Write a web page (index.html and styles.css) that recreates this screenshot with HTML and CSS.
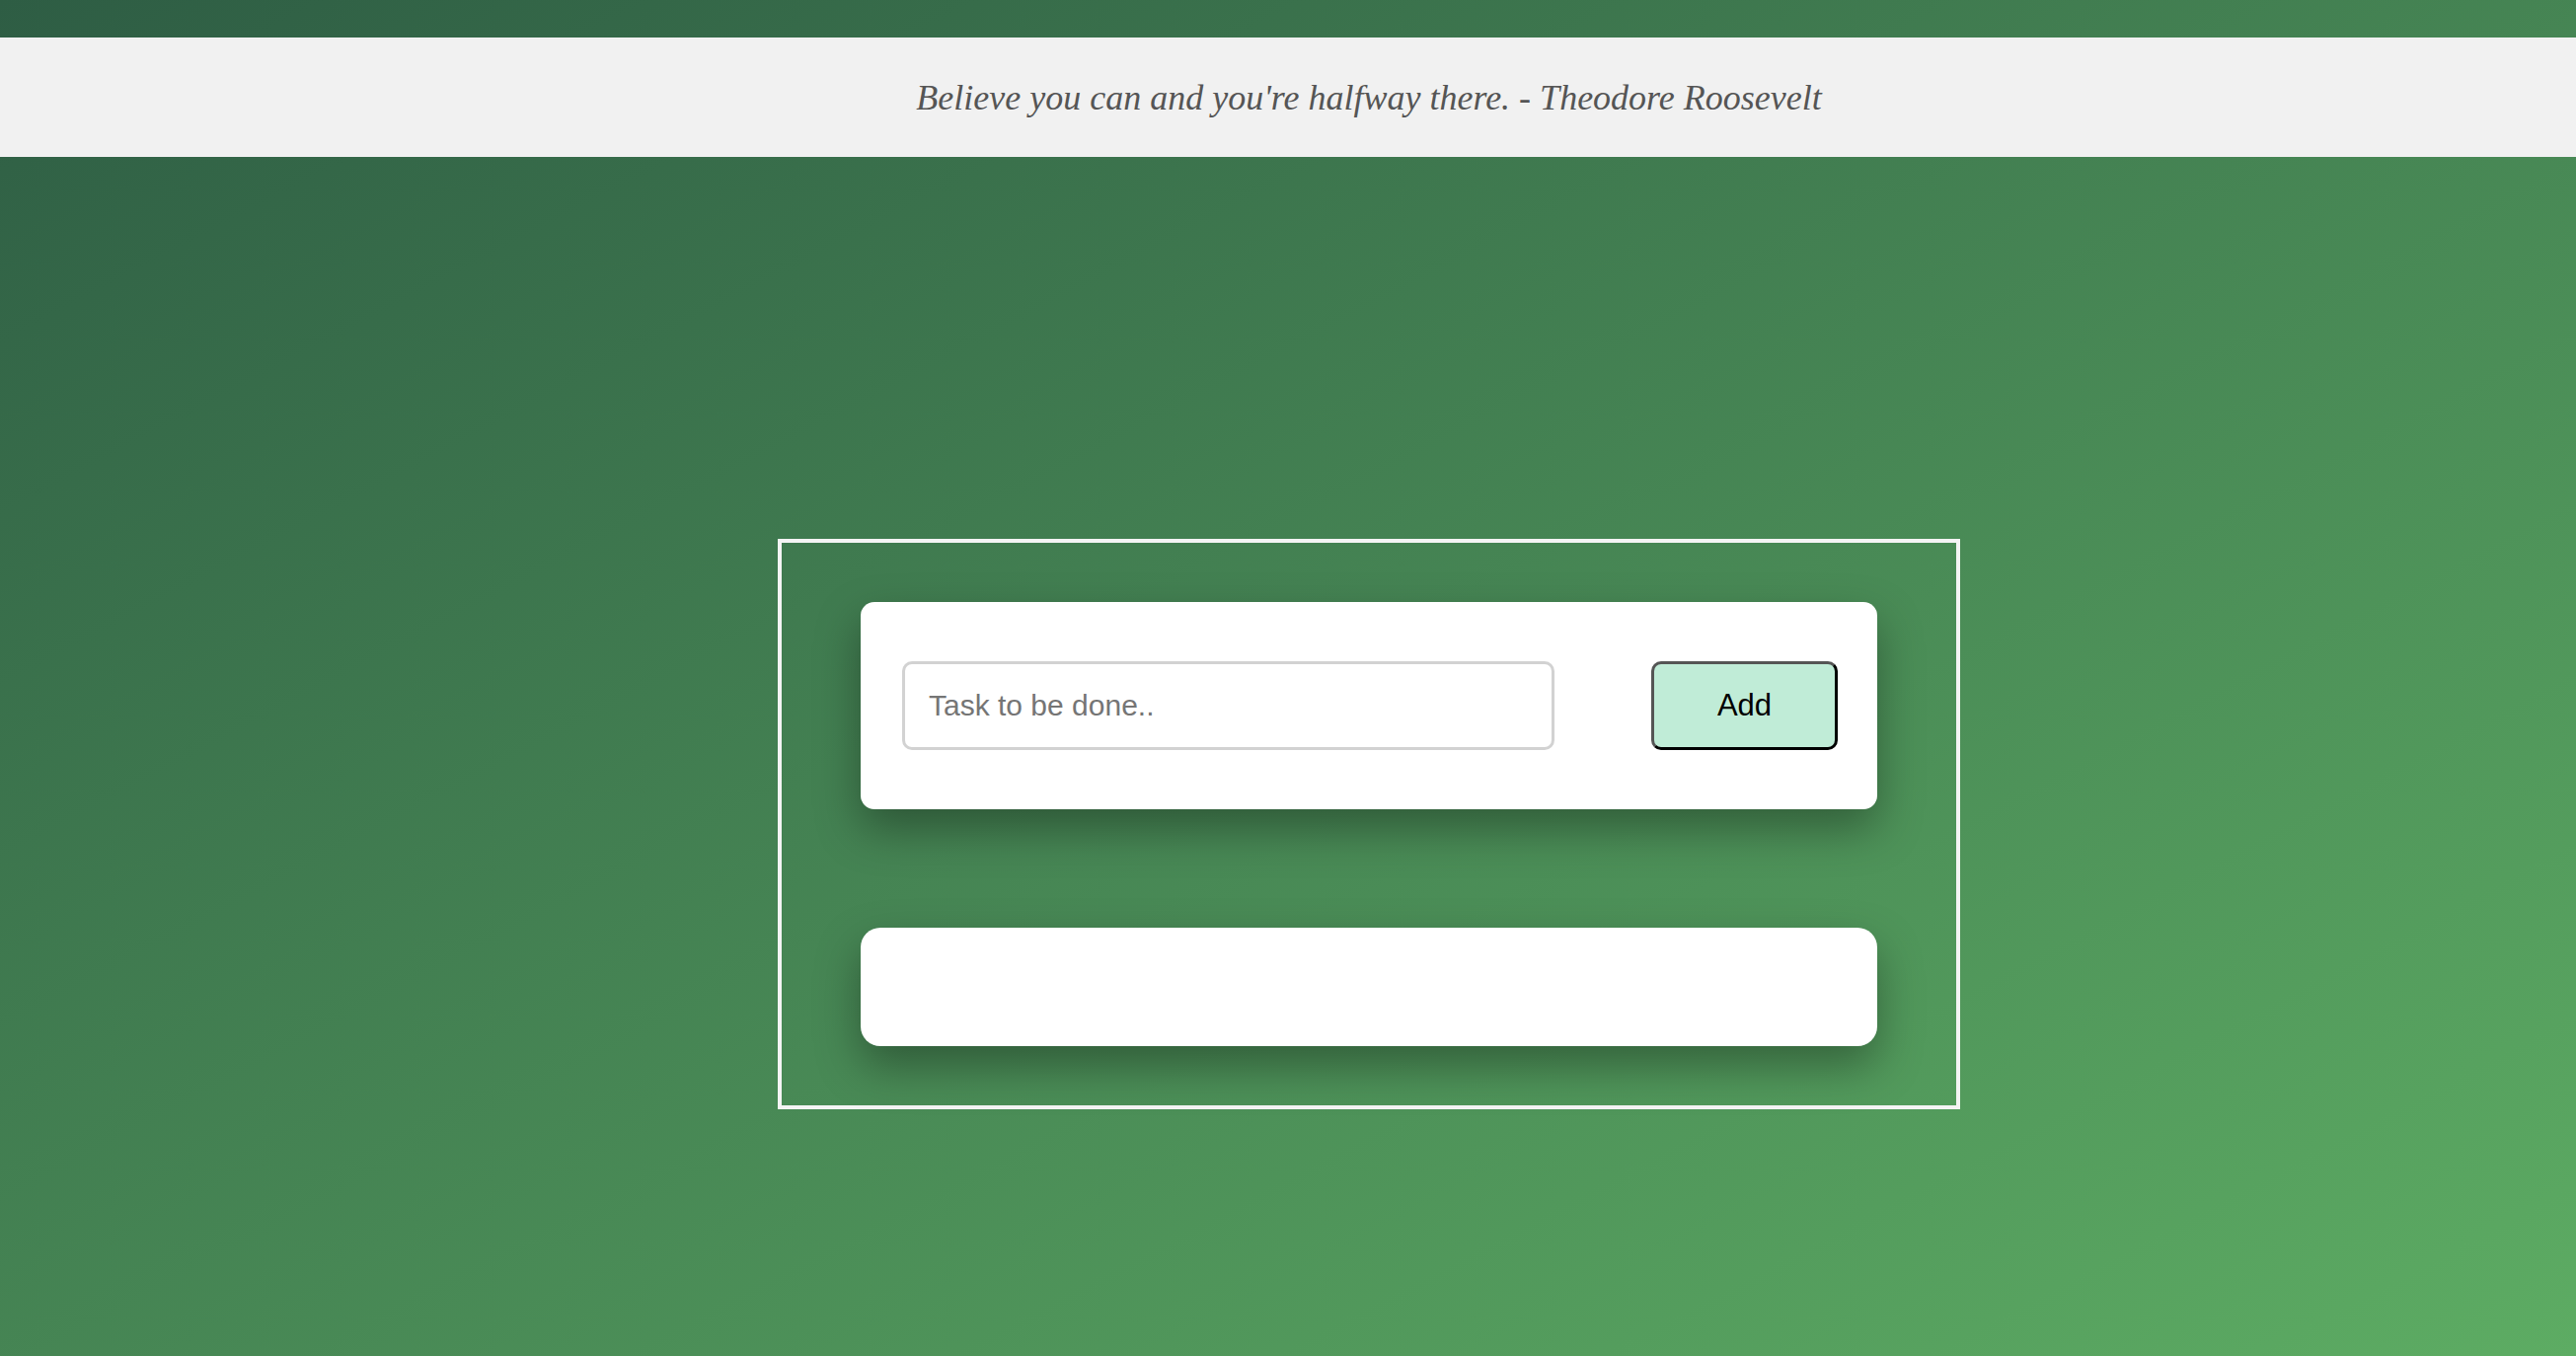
FILE: index.html
```html
<!DOCTYPE html>
<html lang="en">
<head>
<meta charset="utf-8">
<title>To Do</title>
<link rel="stylesheet" href="styles.css">
</head>
<body>
<header class="quote-bar">
  <p class="quote">Believe you can and you're halfway there. - Theodore Roosevelt</p>
</header>
<main class="main">
  <section class="frame">
    <div class="entry-card">
      <input class="task-input" type="text" placeholder="Task to be done..">
      <button class="add-btn" type="button">Add</button>
    </div>
    <div class="list-card"></div>
  </section>
</main>
</body>
</html>
```

FILE: styles.css
```css
html, body {
  margin: 0;
  padding: 0;
  min-height: 100%;
}
body {
  min-height: 1374px;
  background: linear-gradient(to bottom right, #2e5d44, #5dac63);
  font-family: "Liberation Sans", Arial, sans-serif;
}
.quote-bar {
  margin-top: 38px;
  height: 121px;
  background: #f1f1f1;
  display: flex;
  align-items: center;
  justify-content: center;
  padding-left: 164px;
}
.quote {
  margin: 0;
  font-family: "Liberation Serif", "Times New Roman", serif;
  font-style: italic;
  font-size: 36px;
  color: #555555;
}
.main {
  display: flex;
  justify-content: center;
  padding-left: 164px;
  margin-top: 387px;
}
.frame {
  border: 4px solid #f4f4f4;
  padding: 60px 80px 60px;
  display: flex;
  flex-direction: column;
  gap: 120px;
}
.entry-card {
  width: 1030px;
  box-sizing: border-box;
  background: #ffffff;
  border-radius: 14px;
  padding: 60px 40px 60px 42px;
  display: flex;
  justify-content: space-between;
  align-items: center;
  box-shadow: 0 20px 45px rgba(0, 0, 0, 0.34);
}
.task-input {
  width: 661px;
  height: 90px;
  box-sizing: border-box;
  border: 3px solid #d2d2d2;
  border-radius: 10px;
  padding: 0 0 0 24px;
  font-family: "Liberation Sans", Arial, sans-serif;
  font-size: 30px;
  color: #333;
  outline: none;
}
.task-input::placeholder {
  color: #757575;
}
.add-btn {
  width: 189px;
  height: 90px;
  box-sizing: border-box;
  background: #c0ecd7;
  border: 3px solid;
  border-color: #555555 #000000 #000000 #555555;
  border-radius: 10px;
  font-family: "Liberation Sans", Arial, sans-serif;
  font-size: 31px;
  color: #000;
  padding: 0;
}
.list-card {
  width: 1030px;
  height: 120px;
  background: #ffffff;
  border-radius: 20px;
  box-shadow: 0 20px 45px rgba(0, 0, 0, 0.34);
}
```
